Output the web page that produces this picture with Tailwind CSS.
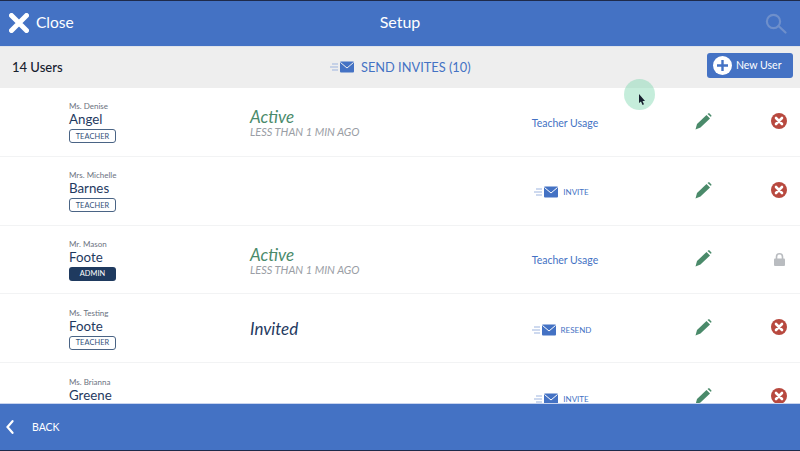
<!DOCTYPE html>
<html>
<head>
<meta charset="utf-8">
<script src="https://cdn.jsdelivr.net/npm/@tailwindcss/browser@4"></script>
</head>
<body class="m-0">
<div class="relative flex flex-col w-[800px] h-[451px] overflow-hidden bg-white font-['Lato','Noto_Sans',sans-serif]">
  <!-- header -->
  <header class="relative shrink-0 h-[47px] flex items-center justify-between bg-[#4472c4] border-t border-t-[#1e2a4a] border-b border-b-[#dfe3ea] pb-[2px] pl-[9px] pr-[13px]">
    <div class="flex items-center gap-[7px] text-white">
      <svg class="mt-[1px]" width="20" height="20" viewBox="0 0 20 20"><path d="M2.5 2.5 17.5 17.5M17.5 2.5 2.5 17.5" stroke="#fff" stroke-width="5" stroke-linecap="round"/></svg>
      <span class="text-[15.5px] leading-none">Close</span>
    </div>
    <span class="absolute left-0 right-0 -mt-[2px] text-center text-[16px] leading-none text-white">Setup</span>
    <svg class="mt-[2px]" width="22" height="21" viewBox="0 0 22 21" fill="none" stroke="#6e8fcb" stroke-width="2.2"><circle cx="8.5" cy="8.5" r="6.6"/><path d="M13.5 13 20.5 19.5" stroke-linecap="round"/></svg>
  </header>

  <!-- toolbar -->
  <div class="relative shrink-0 h-[41px] flex items-center justify-between bg-[#eeeeee] pl-[12px] pr-[7px]">
    <span class="text-[13px] font-medium text-[#17202e]">14 Users</span>
    <div class="absolute left-[330px] flex items-center gap-[7px] text-[#4472c4]">
      <svg width="24" height="12" viewBox="0 0 24 12"><path d="M2 3H8M0 6H8M2 9H8" stroke="#9db4df" stroke-width="1"/><rect x="10" y="0.5" width="14" height="11" rx="1" fill="#4472c4"/><path d="M10.5 1.5 17 7 23.5 1.5" fill="none" stroke="#eee" stroke-width="1"/></svg>
      <span class="text-[12.8px] leading-none">SEND INVITES (10)</span>
    </div>
    <button class="flex items-center gap-[4px] w-[86px] h-[25px] mb-[4px] pl-[6px] rounded-[3px] bg-[#4472c4] text-white">
      <svg width="19" height="19" viewBox="0 0 19 19"><circle cx="9.5" cy="9.5" r="9.5" fill="#fff"/><path d="M9.5 4V15M4 9.5H15" stroke="#4472c4" stroke-width="2.4"/></svg>
      <span class="text-[10.5px] leading-none">New User</span>
    </button>
  </div>

  <!-- rows -->
  <main class="flex-1 min-h-0 overflow-hidden">
    <!-- Row 1 -->
    <div class="flex items-center h-[68.75px] border-b border-[#f2f3f4] pl-[69px]">
      <div class="w-[181px] flex flex-col items-start">
        <span class="text-[8px] leading-[12px] text-[#6b7280]">Ms. Denise</span>
        <span class="text-[13.3px] leading-[14px] text-[#1f3a5f]">Angel</span>
        <span class="mt-[3px] w-[47px] h-[14px] flex items-center justify-center rounded-[3px] border border-[#4a6485] text-[7.4px] tracking-[0.1px] text-[#33507a]">TEACHER</span>
      </div>
      <div class="w-[232px] mt-[2px] flex flex-col items-start">
        <span class="text-[17px] leading-[19px] italic text-[#4a8a6a]">Active</span>
        <span class="text-[11px] leading-[12px] italic text-[#9a9ea5]">LESS THAN 1 MIN AGO</span>
      </div>
      <div class="w-[166px] mt-[3px] flex justify-center"><span class="text-[10.5px] text-[#4472c4]">Teacher Usage</span></div>
      <div class="w-[110px] mb-[1px] flex justify-center">
        <svg width="17" height="17" viewBox="0 0 17 17"><path d="M0.5 16.5 2 11 11.5 2 15 5.5 5.5 14.5Z" fill="#4a8a6a"/><path d="M12.5 1 14 0 16.5 2.5 16 4Z" fill="#4a8a6a"/></svg>
      </div>
      <div class="w-[42px] mb-[2px] flex justify-center">
        <svg width="16" height="16" viewBox="0 0 16 16"><circle cx="8" cy="8" r="8" fill="#b8493f"/><path d="M5 5 11 11M11 5 5 11" stroke="#fff" stroke-width="2.6" stroke-linecap="round"/></svg>
      </div>
    </div>

    <!-- Row 2 -->
    <div class="flex items-center h-[68.75px] border-b border-[#f2f3f4] pl-[69px]">
      <div class="w-[181px] flex flex-col items-start">
        <span class="text-[8px] leading-[12px] text-[#6b7280]">Mrs. Michelle</span>
        <span class="text-[13.3px] leading-[14px] text-[#1f3a5f]">Barnes</span>
        <span class="mt-[3px] w-[47px] h-[14px] flex items-center justify-center rounded-[3px] border border-[#4a6485] text-[7.4px] tracking-[0.1px] text-[#33507a]">TEACHER</span>
      </div>
      <div class="w-[232px]"></div>
      <div class="w-[166px] mt-[3px] flex justify-center">
        <div class="flex items-center gap-[5px] mr-[7px] text-[#4472c4]">
          <svg width="24" height="12" viewBox="0 0 24 12"><path d="M2 3H8M0 6H8M2 9H8" stroke="#9db4df" stroke-width="1"/><rect x="10" y="0.5" width="14" height="11" rx="1" fill="#4472c4"/><path d="M10.5 1.5 17 7 23.5 1.5" fill="none" stroke="#fff" stroke-width="1"/></svg>
          <span class="text-[8px] leading-none">INVITE</span>
        </div>
      </div>
      <div class="w-[110px] mb-[1px] flex justify-center">
        <svg width="17" height="17" viewBox="0 0 17 17"><path d="M0.5 16.5 2 11 11.5 2 15 5.5 5.5 14.5Z" fill="#4a8a6a"/><path d="M12.5 1 14 0 16.5 2.5 16 4Z" fill="#4a8a6a"/></svg>
      </div>
      <div class="w-[42px] mb-[2px] flex justify-center">
        <svg width="16" height="16" viewBox="0 0 16 16"><circle cx="8" cy="8" r="8" fill="#b8493f"/><path d="M5 5 11 11M11 5 5 11" stroke="#fff" stroke-width="2.6" stroke-linecap="round"/></svg>
      </div>
    </div>

    <!-- Row 3 -->
    <div class="flex items-center h-[68.75px] border-b border-[#f2f3f4] pl-[69px]">
      <div class="w-[181px] flex flex-col items-start">
        <span class="text-[8px] leading-[12px] text-[#6b7280]">Mr. Mason</span>
        <span class="text-[13.3px] leading-[14px] text-[#1f3a5f]">Foote</span>
        <span class="mt-[3px] w-[47px] h-[14px] flex items-center justify-center rounded-[3px] bg-[#1f3a5f] text-[7.4px] tracking-[0.1px] text-white">ADMIN</span>
      </div>
      <div class="w-[232px] mt-[2px] flex flex-col items-start">
        <span class="text-[17px] leading-[19px] italic text-[#4a8a6a]">Active</span>
        <span class="text-[11px] leading-[12px] italic text-[#9a9ea5]">LESS THAN 1 MIN AGO</span>
      </div>
      <div class="w-[166px] mt-[3px] flex justify-center"><span class="text-[10.5px] text-[#4472c4]">Teacher Usage</span></div>
      <div class="w-[110px] mb-[1px] flex justify-center">
        <svg width="17" height="17" viewBox="0 0 17 17"><path d="M0.5 16.5 2 11 11.5 2 15 5.5 5.5 14.5Z" fill="#4a8a6a"/><path d="M12.5 1 14 0 16.5 2.5 16 4Z" fill="#4a8a6a"/></svg>
      </div>
      <div class="w-[42px] flex justify-center">
        <svg width="11" height="13" viewBox="0 0 11 13"><path d="M2.5 6V3.8a3 3 0 0 1 6 0V6" fill="none" stroke="#b9bcc0" stroke-width="1.6"/><rect x="0" y="5.5" width="11" height="7.5" rx="1" fill="#b9bcc0"/></svg>
      </div>
    </div>

    <!-- Row 4 -->
    <div class="flex items-center h-[68.75px] border-b border-[#f2f3f4] pl-[69px]">
      <div class="w-[181px] flex flex-col items-start">
        <span class="text-[8px] leading-[12px] text-[#6b7280]">Ms. Testing</span>
        <span class="text-[13.3px] leading-[14px] text-[#1f3a5f]">Foote</span>
        <span class="mt-[3px] w-[47px] h-[14px] flex items-center justify-center rounded-[3px] border border-[#4a6485] text-[7.4px] tracking-[0.1px] text-[#33507a]">TEACHER</span>
      </div>
      <div class="w-[232px] mt-[2px]"><span class="text-[17px] italic text-[#1f3a5f]">Invited</span></div>
      <div class="w-[166px] mt-[3px] flex justify-center">
        <div class="flex items-center gap-[5px] mr-[7px] text-[#4472c4]">
          <svg width="24" height="12" viewBox="0 0 24 12"><path d="M2 3H8M0 6H8M2 9H8" stroke="#9db4df" stroke-width="1"/><rect x="10" y="0.5" width="14" height="11" rx="1" fill="#4472c4"/><path d="M10.5 1.5 17 7 23.5 1.5" fill="none" stroke="#fff" stroke-width="1"/></svg>
          <span class="text-[8px] leading-none">RESEND</span>
        </div>
      </div>
      <div class="w-[110px] mb-[1px] flex justify-center">
        <svg width="17" height="17" viewBox="0 0 17 17"><path d="M0.5 16.5 2 11 11.5 2 15 5.5 5.5 14.5Z" fill="#4a8a6a"/><path d="M12.5 1 14 0 16.5 2.5 16 4Z" fill="#4a8a6a"/></svg>
      </div>
      <div class="w-[42px] mb-[2px] flex justify-center">
        <svg width="16" height="16" viewBox="0 0 16 16"><circle cx="8" cy="8" r="8" fill="#b8493f"/><path d="M5 5 11 11M11 5 5 11" stroke="#fff" stroke-width="2.6" stroke-linecap="round"/></svg>
      </div>
    </div>

    <!-- Row 5 -->
    <div class="flex items-center h-[68.75px] pl-[69px]">
      <div class="w-[181px] flex flex-col items-start">
        <span class="text-[8px] leading-[12px] text-[#6b7280]">Ms. Brianna</span>
        <span class="text-[13.3px] leading-[14px] text-[#1f3a5f]">Greene</span>
        <span class="mt-[3px] w-[47px] h-[14px] rounded-[3px] border border-[#4a6485]"></span>
      </div>
      <div class="w-[232px]"></div>
      <div class="w-[166px] mt-[3px] flex justify-center">
        <div class="flex items-center gap-[5px] mr-[7px] text-[#4472c4]">
          <svg width="24" height="12" viewBox="0 0 24 12"><path d="M2 3H8M0 6H8M2 9H8" stroke="#9db4df" stroke-width="1"/><rect x="10" y="0.5" width="14" height="11" rx="1" fill="#4472c4"/><path d="M10.5 1.5 17 7 23.5 1.5" fill="none" stroke="#fff" stroke-width="1"/></svg>
          <span class="text-[8px] leading-none">INVITE</span>
        </div>
      </div>
      <div class="w-[110px] mb-[1px] flex justify-center">
        <svg width="17" height="17" viewBox="0 0 17 17"><path d="M0.5 16.5 2 11 11.5 2 15 5.5 5.5 14.5Z" fill="#4a8a6a"/><path d="M12.5 1 14 0 16.5 2.5 16 4Z" fill="#4a8a6a"/></svg>
      </div>
      <div class="w-[42px] mb-[2px] flex justify-center">
        <svg width="16" height="16" viewBox="0 0 16 16"><circle cx="8" cy="8" r="8" fill="#b8493f"/><path d="M5 5 11 11M11 5 5 11" stroke="#fff" stroke-width="2.6" stroke-linecap="round"/></svg>
      </div>
    </div>
  </main>

  <!-- footer -->
  <footer class="shrink-0 h-[48px] flex items-center gap-[18px] bg-[#4472c4] border-t border-t-[#c9d4ee] border-b border-b-[#1e2a4a] pl-[6px] text-white">
    <svg width="8" height="14" viewBox="0 0 8 14" fill="none"><path d="M6.5 1.2 1.5 7 6.5 12.8" stroke="#fff" stroke-width="2.2" stroke-linecap="round"/></svg>
    <span class="text-[10.5px] leading-none">BACK</span>
  </footer>

  <!-- cursor ripple -->
  <div class="absolute left-[624px] top-[79px] w-[31px] h-[31px] rounded-full bg-[#7fd6b0]/45"></div>
  <svg class="absolute left-[638px] top-[94px]" width="8" height="12" viewBox="0 0 8 12"><path d="M1 0 1 9 3 7.5 4.5 11 6 10.2 4.5 7 7 7Z" fill="#17202e"/></svg>
</div>
</body>
</html>
